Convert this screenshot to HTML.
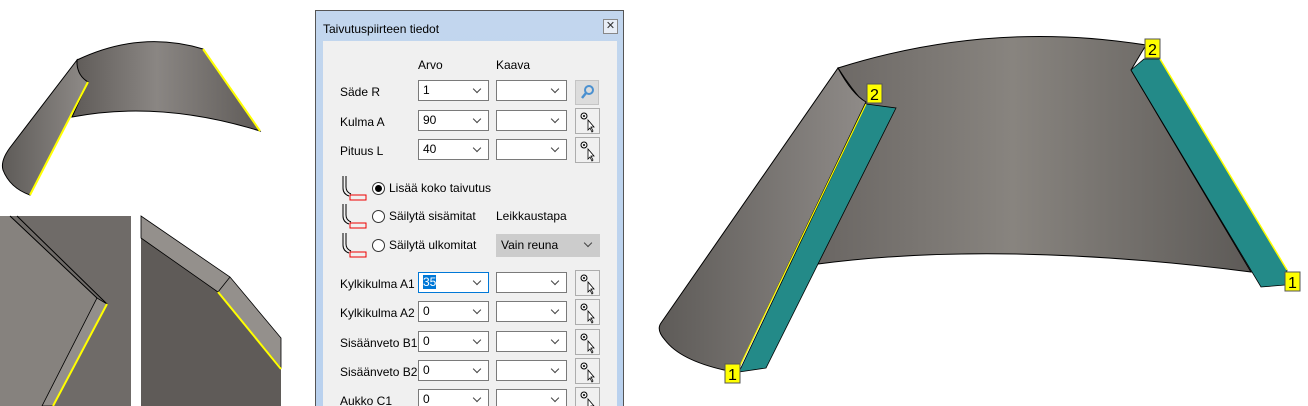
<!DOCTYPE html>
<html><head><meta charset="utf-8"><style>
html,body{margin:0;width:1308px;height:406px;overflow:hidden}
body{background:#fff;position:relative;font-family:"Liberation Sans",sans-serif;font-size:12px;color:#000}
.a{position:absolute}
.dlg{left:315px;top:10px;width:307px;height:400px;border:1px solid #555;border-bottom:none;background:linear-gradient(#c2d6ee,#b9d1ee)}
.inner{left:7px;top:30px;width:294px;height:366px;background:#f0f0f0}
.cb{position:absolute;height:21px;border:1px solid #7a7a7a;background:#fff;box-sizing:border-box;padding:2px 0 0 4px;font-size:12px}
.cb:after{content:"";position:absolute;right:8px;top:5px;width:5px;height:5px;border-right:1px solid #444;border-bottom:1px solid #444;transform:rotate(45deg)}
.btn{position:absolute;width:24px;height:25px;border:1px solid #adadad;background:#f0f0f0;box-sizing:border-box}
.lbl{position:absolute;font-size:12px}
.rad{position:absolute;width:11px;height:11px;border:1px solid #333;border-radius:50%;background:#fff}
</style></head><body>
<svg class="a" style="left:0;top:0" width="1308" height="406">
<defs>
<linearGradient id="g1" x1="0" x2="1"><stop offset="0" stop-color="#5e5a57"/><stop offset=".45" stop-color="#8a8683"/><stop offset="1" stop-color="#5f5b58"/></linearGradient>
<linearGradient id="g2" x1="0" x2="1"><stop offset="0" stop-color="#5e5b58"/><stop offset="1" stop-color="#8f8b88"/></linearGradient>
<linearGradient id="g3" x1="0" x2="1"><stop offset="0" stop-color="#6a6663"/><stop offset=".45" stop-color="#88847f"/><stop offset="1" stop-color="#5d5a57"/></linearGradient>
</defs>
<!-- small top-left shape -->
<path d="M77,60 Q140,30 203,49 L260,131 Q160,100 72,117 L88,82 Q78,76 77,70 Z" fill="url(#g1)" stroke="#000" stroke-width="1"/>
<path d="M77,60 L12,145 Q0,160 3,170 Q10,188 30,195 L88,82 Q78,76 77,64 Z" fill="url(#g2)" stroke="#000" stroke-width="1"/>
<line x1="203" y1="49" x2="260" y2="131" stroke="#ffff00" stroke-width="2"/>
<line x1="88" y1="82" x2="30" y2="195" stroke="#ffff00" stroke-width="2"/>
<!-- bottom-left panel 1 -->
<rect x="0" y="216" width="131" height="190" fill="#6f6b68"/>
<path d="M0,216 L10,216 L97,298 L42,406 L0,406 Z" fill="#86827e"/>
<path d="M10,216 L97,298 M17,216 L107,304" stroke="#000" fill="none" stroke-width="1"/>
<path d="M97,298 L107,304 L53,406 L42,406 Z" fill="#938f8b" stroke="#000" stroke-width=".8"/>
<line x1="107" y1="304" x2="53" y2="406" stroke="#ffff00" stroke-width="2"/>
<!-- panel 2 -->
<rect x="141" y="216" width="140" height="190" fill="#5f5b58"/>
<path d="M141,216 L281,216 L281,338 L230,277 Z" fill="#fff"/>
<path d="M141,216 L230,277 L281,338 L281,368 L218,292 L141,238 Z" fill="#94908c" stroke="#000" stroke-width=".8"/>
<line x1="218" y1="292" x2="230" y2="277" stroke="#000" stroke-width=".8"/>
<line x1="218" y1="292" x2="281" y2="369" stroke="#ffff00" stroke-width="2"/>
<!-- big right shape -->
<path d="M838,68 Q990,20 1146,45 L1131,70 L1251,272 Q1000,240 818,264 L866,105 Q852,90 838,68 Z" fill="url(#g3)" stroke="#000" stroke-width="1"/>
<path d="M838,68 Q852,94 866,102 L738,370 L724,370 Q680,360 665,340 Q656,330 661,323 Z" fill="url(#g2)" stroke="#000" stroke-width="1"/>
<path d="M866,104 L896,108 L766,368 L739,372 Z" fill="#238a88" stroke="#000" stroke-width=".8"/>
<line x1="866" y1="104" x2="738" y2="370" stroke="#ffff00" stroke-width="1.2"/>
<path d="M1131,70 L1144,59 L1160,59 L1287,270 L1285,285 L1261,287 Z" fill="#238a88" stroke="#000" stroke-width=".8"/>
<line x1="1160" y1="59" x2="1287" y2="270" stroke="#ffff00" stroke-width="1.5"/>
<g font-family="Liberation Sans" font-size="16" text-anchor="middle">
<rect x="1145" y="39" width="15" height="19" fill="#ffff00" stroke="#555"/><text x="1152.5" y="55">2</text>
<rect x="867" y="84" width="15" height="19" fill="#ffff00" stroke="#555"/><text x="874.5" y="100">2</text>
<rect x="725" y="364" width="15" height="19" fill="#ffff00" stroke="#555"/><text x="732.5" y="380">1</text>
<rect x="1285" y="272" width="15" height="19" fill="#ffff00" stroke="#555"/><text x="1292.5" y="288">1</text>
</g>
</svg>

<div class="a dlg">
<div class="a" style="left:7px;top:11px;font-size:12px">Taivutuspiirteen tiedot</div>
<div class="a" style="left:287px;top:8px;width:13px;height:13px;border:1px solid #888;background:#e8eef6;font-size:11px;line-height:13px;text-align:center;color:#333">✕</div>
<div class="a inner"></div>
</div>

<div class="lbl" style="left:418px;top:58px">Arvo</div>
<div class="lbl" style="left:496px;top:58px">Kaava</div>

<div class="lbl" style="left:340px;top:85px">Säde R</div>
<div class="cb" style="left:418px;top:80px;width:71px">1</div>
<div class="cb" style="left:496px;top:80px;width:71px"></div>
<div class="btn" style="left:575px;top:80px;background:#dcdcdc;border-color:#c4c4c4"><svg width="22" height="23"><circle cx="13" cy="9" r="4" fill="none" stroke="#4a90d0" stroke-width="2"/><line x1="10" y1="12" x2="6" y2="17" stroke="#4a90d0" stroke-width="2.5"/></svg></div>

<div class="lbl" style="left:340px;top:115px">Kulma A</div>
<div class="cb" style="left:418px;top:110px;width:71px">90</div>
<div class="cb" style="left:496px;top:110px;width:71px"></div>
<div class="lbl" style="left:340px;top:144px">Pituus L</div>
<div class="cb" style="left:418px;top:139px;width:71px">40</div>
<div class="cb" style="left:496px;top:139px;width:71px"></div>

<div class="lbl" style="left:340px;top:277px">Kylkikulma A1</div>
<div class="cb" style="left:418px;top:272px;width:71px;border-color:#0078d7"><span style="background:#0078d7;color:#fff">35</span></div>
<div class="cb" style="left:496px;top:272px;width:71px"></div>
<div class="lbl" style="left:340px;top:306px">Kylkikulma A2</div>
<div class="cb" style="left:418px;top:301px;width:71px">0</div>
<div class="cb" style="left:496px;top:301px;width:71px"></div>
<div class="lbl" style="left:340px;top:336px">Sisäänveto B1</div>
<div class="cb" style="left:418px;top:331px;width:71px">0</div>
<div class="cb" style="left:496px;top:331px;width:71px"></div>
<div class="lbl" style="left:340px;top:365px">Sisäänveto B2</div>
<div class="cb" style="left:418px;top:360px;width:71px">0</div>
<div class="cb" style="left:496px;top:360px;width:71px"></div>
<div class="lbl" style="left:340px;top:394px">Aukko C1</div>
<div class="cb" style="left:418px;top:389px;width:71px">0</div>
<div class="cb" style="left:496px;top:389px;width:71px"></div>

<svg class="a" style="left:575px;top:108px" width="25" height="298">
<g id="pk"><rect x=".5" y=".5" width="24" height="25" fill="#f0f0f0" stroke="#adadad"/><circle cx="9" cy="8" r="3" fill="none" stroke="#000"/><circle cx="9" cy="8" r="1" fill="#000"/><path d="M13,12 L13,22 L15,20 L17,24 L18,23 L16,19 L19,19 Z" fill="#fff" stroke="#000" stroke-width=".8"/></g>
<use href="#pk" y="29"/><use href="#pk" y="162"/><use href="#pk" y="191"/><use href="#pk" y="221"/><use href="#pk" y="250"/><use href="#pk" y="279"/>
</svg>

<svg class="a" style="left:338px;top:174px" width="30" height="90">
<g id="bi" fill="none"><path d="M5,2 L5,14 Q5,20 11,22 M8,2 L8,13 Q8,18 13,20" stroke="#000"/><rect x="12" y="21" width="16" height="5" stroke="#e00"/></g>
<use href="#bi" y="28"/><use href="#bi" y="57"/>
</svg>
<div class="rad" style="left:372px;top:182px"><div style="position:absolute;left:2px;top:2px;width:7px;height:7px;border-radius:50%;background:#000"></div></div>
<div class="lbl" style="left:389px;top:181px">Lisää koko taivutus</div>
<div class="rad" style="left:372px;top:210px"></div>
<div class="lbl" style="left:389px;top:209px">Säilytä sisämitat</div>
<div class="rad" style="left:372px;top:239px"></div>
<div class="lbl" style="left:389px;top:238px">Säilytä ulkomitat</div>
<div class="lbl" style="left:496px;top:209px">Leikkaustapa</div>
<div class="cb" style="left:496px;top:234px;width:104px;height:23px;background:#ccc;border-color:#ccc;padding-top:3px">Vain reuna</div>
</body></html>
